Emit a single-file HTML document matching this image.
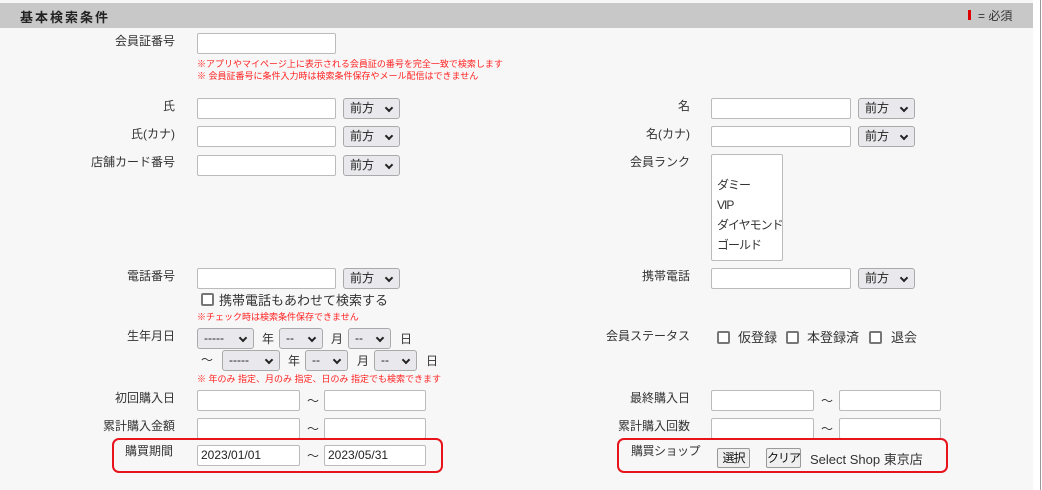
<!DOCTYPE html>
<html><head><meta charset="utf-8"><style>
*{box-sizing:border-box}
body{margin:0;width:1042px;height:490px;background:#fff;font-family:"Liberation Sans","Noto Sans CJK JP",sans-serif;font-size:12px;color:#333;position:relative;overflow:hidden}
.main{position:absolute;left:0;top:0;width:1033px;height:490px;background:#f7f7f7}
.rline{position:absolute;left:1040px;top:0;width:1px;height:490px;background:#999}
.hdr{position:absolute;left:0;top:3px;width:1033px;height:25px;background:#c8c8c8}
.a{position:absolute;white-space:nowrap}
.lbl{position:absolute;text-align:right;white-space:nowrap;line-height:14px}
.in{position:absolute;background:#fff;border:1px solid #bbb;border-radius:2px;height:21px;white-space:nowrap;overflow:hidden}
.sel{position:absolute;background:#e9e9ed;border:1px solid #aaa;border-radius:3px;height:21px;font-size:12px;line-height:19px;padding-left:6px;color:#222;white-space:nowrap}
.sel:after{content:"";position:absolute;right:7px;top:6px;width:4px;height:4px;border-right:2px solid #222;border-bottom:2px solid #222;transform:rotate(45deg)}
.red{position:absolute;color:#f22;font-size:9px;white-space:nowrap}
.cb{position:absolute;width:13px;height:13px;border:2px solid #777;border-radius:2px;background:#fff}
.box{position:absolute;border:2px solid #e8141c;border-radius:7px}
.btn{position:absolute;background:#efefef;border:1px solid #999;border-radius:2px;height:20px;line-height:18px;text-align:center;font-size:12px;color:#111;white-space:nowrap;letter-spacing:-1px}
</style></head><body>
<div class="main"></div><div class="rline"></div>
<div class="hdr"></div>
<div class="a" style="left:20px;top:7px;font-size:13px;font-weight:bold;letter-spacing:2px;color:#222">基本検索条件</div>
<div class="a" style="left:968px;top:10px;width:3px;height:10px;background:#d00"></div>
<div class="a" style="left:978px;top:7px;font-size:12px">= 必須</div>

<div class="lbl" style="right:867px;top:34px">会員証番号</div>
<div class="in" style="left:197px;top:33px;width:139px"></div>
<div class="red" style="left:197px;top:57px">※アプリやマイページ上に表示される会員証の番号を完全一致で検索します</div>
<div class="red" style="left:197px;top:69px">※ 会員証番号に条件入力時は検索条件保存やメール配信はできません</div>

<div class="lbl" style="right:867px;top:99px">氏</div>
<div class="in" style="left:197px;top:98px;width:139px"></div><div class="sel" style="left:343px;top:98px;width:57px">前方</div>
<div class="lbl" style="right:867px;top:127px">氏(カナ)</div>
<div class="in" style="left:197px;top:126px;width:139px"></div><div class="sel" style="left:343px;top:126px;width:57px">前方</div>
<div class="lbl" style="right:867px;top:155px">店舗カード番号</div>
<div class="in" style="left:197px;top:155px;width:139px"></div><div class="sel" style="left:343px;top:155px;width:57px">前方</div>

<div class="lbl" style="right:352px;top:99px">名</div>
<div class="in" style="left:711px;top:98px;width:140px"></div><div class="sel" style="left:858px;top:98px;width:57px">前方</div>
<div class="lbl" style="right:352px;top:127px">名(カナ)</div>
<div class="in" style="left:711px;top:126px;width:140px"></div><div class="sel" style="left:858px;top:126px;width:57px">前方</div>
<div class="lbl" style="right:352px;top:155px">会員ランク</div>
<div class="in" style="left:711px;top:154px;width:72px;height:107px;font-size:12px;line-height:20px;padding:20px 0 0 5px;letter-spacing:-1px">ダミー<br>VIP<br>ダイヤモンド<br>ゴールド</div>

<div class="lbl" style="right:867px;top:269px">電話番号</div>
<div class="in" style="left:197px;top:268px;width:139px"></div><div class="sel" style="left:343px;top:268px;width:57px">前方</div>
<div class="cb" style="left:201px;top:293px"></div>
<div class="a" style="left:219px;top:290px;font-size:13px">携帯電話もあわせて検索する</div>
<div class="red" style="left:197px;top:310px">※チェック時は検索条件保存できません</div>
<div class="lbl" style="right:352px;top:269px">携帯電話</div>
<div class="in" style="left:711px;top:268px;width:140px"></div><div class="sel" style="left:858px;top:268px;width:57px">前方</div>

<div class="lbl" style="right:867px;top:329px">生年月日</div>
<div class="sel" style="left:197px;top:328px;width:57px">-----</div><div class="a" style="left:262px;top:330px">年</div>
<div class="sel" style="left:279px;top:328px;width:44px">--</div><div class="a" style="left:331px;top:330px">月</div>
<div class="sel" style="left:348px;top:328px;width:43px">--</div><div class="a" style="left:400px;top:330px">日</div>
<div class="a" style="left:201px;top:351px">～</div>
<div class="sel" style="left:222px;top:350px;width:58px">-----</div><div class="a" style="left:288px;top:352px">年</div>
<div class="sel" style="left:305px;top:350px;width:43px">--</div><div class="a" style="left:357px;top:352px">月</div>
<div class="sel" style="left:374px;top:350px;width:43px">--</div><div class="a" style="left:426px;top:352px">日</div>
<div class="red" style="left:197px;top:372px">※ 年のみ 指定、月のみ 指定、日のみ 指定でも検索できます</div>

<div class="lbl" style="right:352px;top:329px">会員ステータス</div>
<div class="cb" style="left:717px;top:331px"></div><div class="a" style="left:738px;top:327px;font-size:13px">仮登録</div>
<div class="cb" style="left:786px;top:331px"></div><div class="a" style="left:807px;top:327px;font-size:13px">本登録済</div>
<div class="cb" style="left:869px;top:331px"></div><div class="a" style="left:891px;top:327px;font-size:13px">退会</div>

<div class="lbl" style="right:867px;top:391px">初回購入日</div>
<div class="in" style="left:197px;top:390px;width:103px"></div><div class="a" style="left:307px;top:392px">～</div><div class="in" style="left:324px;top:390px;width:102px"></div>
<div class="lbl" style="right:867px;top:419px">累計購入金額</div>
<div class="in" style="left:197px;top:418px;width:103px"></div><div class="a" style="left:307px;top:420px">～</div><div class="in" style="left:324px;top:418px;width:102px"></div>
<div class="lbl" style="right:352px;top:391px">最終購入日</div>
<div class="in" style="left:711px;top:390px;width:103px"></div><div class="a" style="left:821px;top:392px">～</div><div class="in" style="left:839px;top:390px;width:102px"></div>
<div class="lbl" style="right:352px;top:419px">累計購入回数</div>
<div class="in" style="left:711px;top:418px;width:103px"></div><div class="a" style="left:821px;top:420px">～</div><div class="in" style="left:839px;top:418px;width:102px"></div>

<div class="box" style="left:112px;top:438px;width:331px;height:35px"></div>
<div class="lbl" style="left:125px;top:444px">購買期間</div>
<div class="in" style="left:197px;top:445px;width:103px;padding:2px 3px;font-size:12px;color:#222">2023/01/01</div>
<div class="a" style="left:307px;top:447px">～</div>
<div class="in" style="left:324px;top:445px;width:102px;padding:2px 3px;font-size:12px;color:#222">2023/05/31</div>

<div class="box" style="left:617px;top:438px;width:331px;height:35px"></div>
<div class="lbl" style="left:631px;top:444px;letter-spacing:-0.5px">購買ショップ</div>
<div class="btn" style="left:717px;top:448px;width:33px">選択</div>
<div class="btn" style="left:766px;top:448px;width:35px">クリア</div>
<div class="a" style="left:810px;top:449px;font-size:13px">Select Shop 東京店</div>
</body></html>
